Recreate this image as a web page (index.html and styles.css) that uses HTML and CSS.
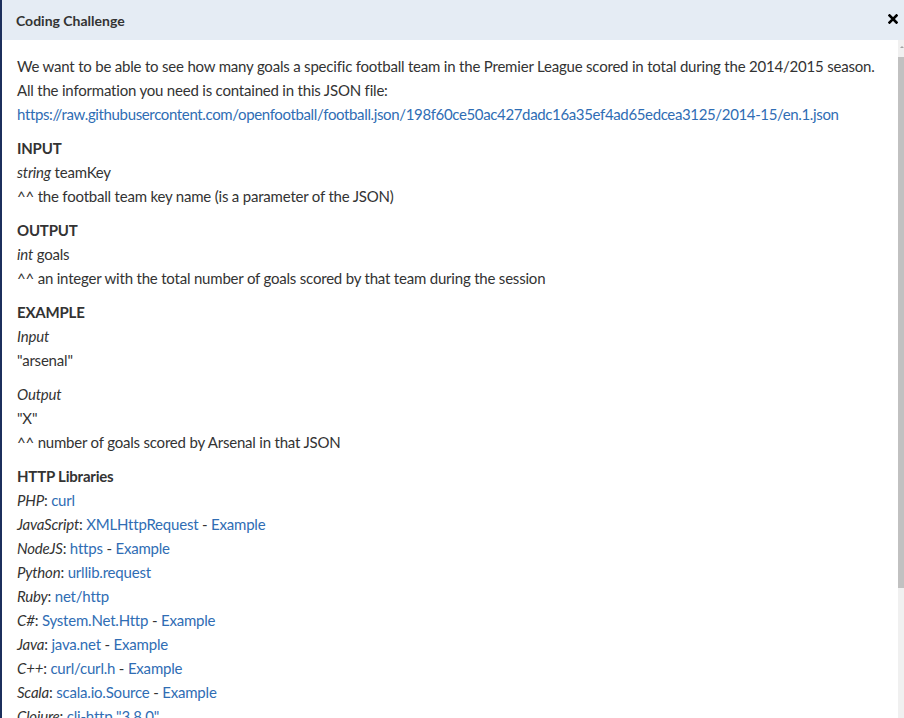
FILE: index.html
```html
<!DOCTYPE html>
<html>
<head>
<meta charset="utf-8">
<link rel="stylesheet" href="styles.css">
</head>
<body>
<div class="modal">
  <div class="modal-header">
    <h4 class="modal-title">Coding Challenge</h4>
    <button class="close" aria-label="Close">
      <svg width="10" height="10" viewBox="0 0 10 10"><path d="M1.5 1.5 L8.5 8.5 M8.5 1.5 L1.5 8.5" stroke="#000" stroke-width="2.6" stroke-linecap="square"/></svg>
    </button>
  </div>
  <div class="modal-main">
    <div class="modal-body">
      <p>We want to be able to see how many goals a specific football team in the Premier League scored in total during the 2014/2015 season.<br>
      All the information you need is contained in this JSON file:<br>
      <a class="url" href="#">https://raw.githubusercontent.com/openfootball/football.json/198f60ce50ac427dadc16a35ef4ad65edcea3125/2014-15/en.1.json</a></p>

      <p><b>INPUT</b><br>
      <i>string</i> teamKey<br>
      ^^ the football team key name (is a parameter of the JSON)</p>

      <p><b>OUTPUT</b><br>
      <i>int</i> goals<br>
      ^^ an integer with the total number of goals scored by that team during the session</p>

      <p><b>EXAMPLE</b><br>
      <i>Input</i><br>
      "arsenal"</p>

      <p><i>Output</i><br>
      "X"<br>
      ^^ number of goals scored by Arsenal in that JSON</p>

      <p><b>HTTP Libraries</b><br>
      <i>PHP</i>: <a href="#">curl</a><br>
      <i>JavaScript</i>: <a href="#">XMLHttpRequest</a> - <a href="#">Example</a><br>
      <i>NodeJS</i>: <a href="#">https</a> - <a href="#">Example</a><br>
      <i>Python</i>: <a href="#">urllib.request</a><br>
      <i>Ruby</i>: <a href="#">net/http</a><br>
      <i>C#</i>: <a href="#">System.Net.Http</a> - <a href="#">Example</a><br>
      <i>Java</i>: <a href="#">java.net</a> - <a href="#">Example</a><br>
      <i>C++</i>: <a href="#">curl/curl.h</a> - <a href="#">Example</a><br>
      <i>Scala</i>: <a href="#">scala.io.Source</a> - <a href="#">Example</a><br>
      <i>Clojure</i>: <a href="#">clj-http "3.8.0"</a></p>
    </div>
    <div class="scrollbar">
      <div class="scroll-btn"><span class="arrow"></span></div>
      <div class="scroll-thumb"></div>
    </div>
  </div>
</div>
</body>
</html>
```
FILE: styles.css
```css
html, body {
  margin: 0;
  padding: 0;
  height: 100%;
  overflow: hidden;
  background: #fff;
}
.modal {
  height: 718px;
  display: flex;
  flex-direction: column;
  border-left: 2px solid #1c2f5c;
  font-family: "Lato", "Open Sans", sans-serif;
  color: #333;
}
.modal-header {
  height: 40px;
  flex: none;
  background: #e5ecf4;
  display: flex;
  align-items: center;
  justify-content: space-between;
  padding: 0 5px 0 14px;
}
.modal-title {
  margin: 0;
  font-size: 14px;
  font-weight: 700;
  color: #333;
}
.close {
  border: 0;
  background: none;
  padding: 0;
  width: 12px;
  height: 12px;
  display: flex;
  align-items: center;
  justify-content: center;
  margin-top: -2px;
}
.modal-main {
  flex: 1;
  min-height: 0;
  display: flex;
}
.modal-body {
  flex: 1;
  overflow: hidden;
  padding: 14px 8px 0 15px;
  font-size: 15px;
  letter-spacing: -0.2px;
  line-height: 24px;
}
.modal-body p {
  margin: 0 0 10px;
}
.modal-body b {
  font-weight: 700;
}
.modal-body a {
  color: #2f6db4;
  text-decoration: none;
}
.modal-body a.url {
  letter-spacing: -0.36px;
}
.scrollbar {
  width: 6px;
  flex: none;
  background: #f0f0f0;
  display: flex;
  flex-direction: column;
}
.scroll-btn {
  height: 17px;
  display: flex;
  justify-content: center;
  align-items: center;
}
.arrow {
  width: 0;
  height: 0;
  border-left: 2px solid transparent;
  border-right: 2px solid transparent;
  border-bottom: 2px solid #a3a3a3;
  margin-left: 2px;
  margin-top: -4px;
}
.scroll-thumb {
  height: 531px;
  background: #c1c1c1;
}
```
